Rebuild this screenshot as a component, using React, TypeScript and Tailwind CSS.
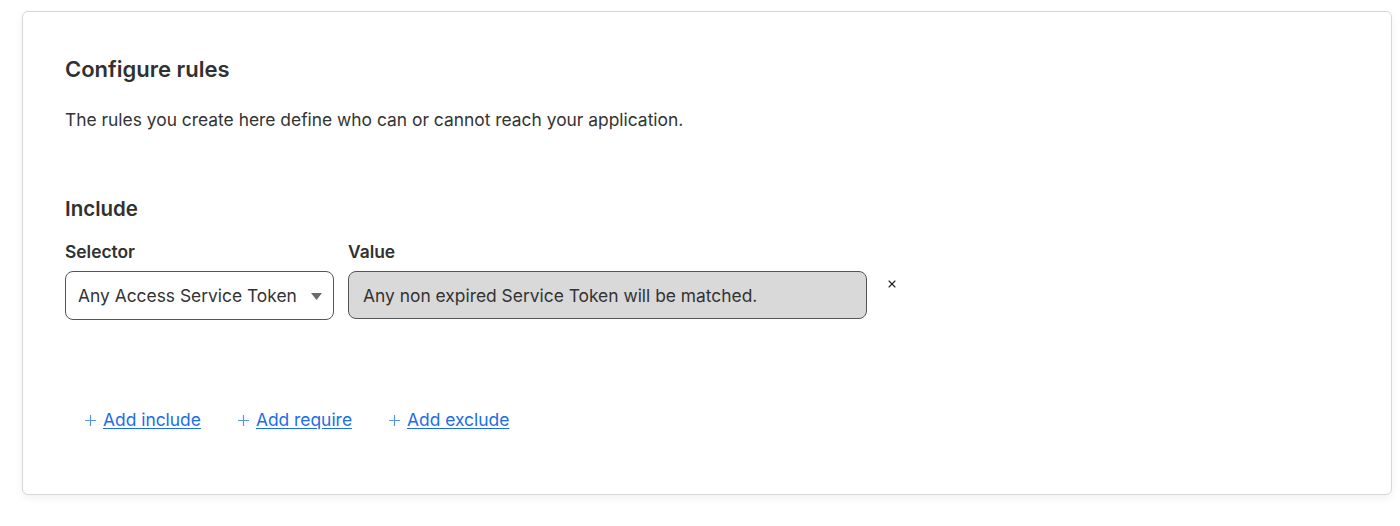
import { X } from 'lucide-react'

const font = { fontFamily: 'Inter, "Noto Sans", sans-serif' }

function AddLink({ label }: { label: string }) {
  return (
    <button className="flex items-center gap-[7px] text-[17.4px] leading-6 text-[#1b6ee6] cursor-pointer">
      <svg width="11" height="11" viewBox="0 0 11 11" className="mt-[1px]">
        <path d="M5.5 0 V11 M0 5.5 H11" stroke="#5b93ec" strokeWidth="1.2" fill="none" />
      </svg>
      <span className="underline underline-offset-2">{label}</span>
    </button>
  )
}

export default function App() {
  return (
    <div className="min-h-[526px] bg-white pt-[11px] pl-[22px]" style={font}>
      <div className="w-[1370px] h-[484px] bg-white border border-[#d6d6d6] rounded-[6px] shadow-[0_3px_8px_rgba(0,0,0,0.06)] pl-[42px] pt-[43px] text-[#333]">
        <h2 className="text-[22px] leading-7 font-semibold text-[#313131]">Configure rules</h2>
        <p className="mt-[25px] text-[17.4px] leading-6 text-[#333]">
          The rules you create here define who can or cannot reach your application.
        </p>

        {/* Include group */}
        <h3 className="mt-[63px] text-[20.5px] leading-7 font-semibold text-[#313131]">Include</h3>
        <div className="mt-[17px] flex items-start">
          <div className="flex flex-col w-[269px]">
            <label className="text-[17.4px] leading-6 font-semibold text-[#313131]">Selector</label>
            <div className="mt-[7px] h-[49px] border border-[#555] rounded-[8px] bg-white flex items-center justify-between pl-[12px] pr-[12px] pt-[2px]">
              <span className="text-[17.4px] text-[#333]">Any Access Service Token</span>
              <svg width="11" height="7" viewBox="0 0 11 7" className="mr-[-1px]">
                <path d="M0 0 L11 0 L5.5 7 Z" fill="#6b6b6b" />
              </svg>
            </div>
          </div>
          <div className="flex flex-col w-[519px] ml-[14px]">
            <label className="text-[17.4px] leading-6 font-semibold text-[#313131]">Value</label>
            <div className="mt-[7px] h-[48px] border border-[#555] rounded-[8px] bg-[#d9d9d9] flex items-center pl-[14px] pt-[2px]">
              <span className="text-[17.4px] text-[#333]">Any non expired Service Token will be matched.</span>
            </div>
          </div>
          <button className="ml-[19px] mt-[38px] text-[#222] cursor-pointer">
            <X className="w-[12px] h-[12px]" strokeWidth={2.2} />
          </button>
        </div>

        <div className="mt-[88px] pl-[20px] flex items-center gap-[37px]">
          <AddLink label="Add include" />
          <AddLink label="Add require" />
          <AddLink label="Add exclude" />
        </div>
      </div>
    </div>
  )
}
